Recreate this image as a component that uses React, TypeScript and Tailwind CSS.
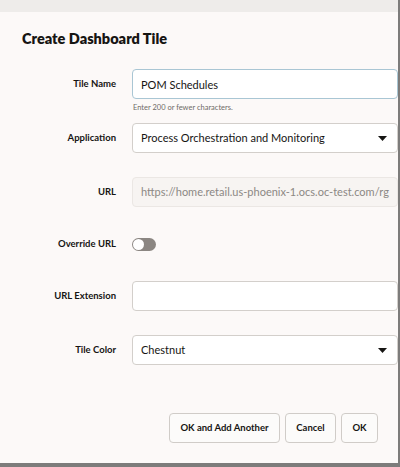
import { useState } from 'react';

const Caret = () => (
  <svg width="9" height="5" viewBox="0 0 9 5" className="shrink-0">
    <path d="M0 0h9L4.5 5z" fill="#161513" />
  </svg>
);

const Label = ({ children }: { children: React.ReactNode }) => (
  <div className="w-[116px] shrink-0 text-right text-[9.5px] font-bold text-[#161513] leading-none">{children}</div>
);

const App = () => {
  const [name, setName] = useState('POM Schedules');
  const [override, setOverride] = useState(false);

  return (
    <div
      className="w-[400px] h-[467px] overflow-hidden bg-[#7d7c7b] text-[#161513]"
      style={{ fontFamily: 'Lato, "Open Sans", sans-serif' }}
    >
      <div className="h-[463px] mr-[2px] flex flex-col bg-[#fcf9f8]">
        <div className="h-3 bg-[#eeecea]" />

        <h1 className="mt-[17px] ml-[22px] text-[14.5px] leading-5 font-extrabold">Create Dashboard Tile</h1>

        {/* Tile Name */}
        <div className="mt-5 flex items-center gap-4">
          <Label>Tile Name</Label>
          <input
            value={name}
            onChange={(e) => setName(e.target.value)}
            className="flex-1 h-[30px] px-2 rounded-[4px] border border-[#a9c6d4] bg-white text-[11px] outline-none"
          />
        </div>
        <div className="mt-[3px] ml-[133px] text-[7.5px] leading-3 text-[#6f6b67]">Enter 200 or fewer characters.</div>

        {/* Application */}
        <div className="mt-[9px] flex items-center gap-4">
          <Label>Application</Label>
          <div className="flex-1 h-[30px] px-2 pr-[10px] rounded-[4px] border border-[#d3cfcb] bg-white flex items-center justify-between text-[11px]">
            <span>Process Orchestration and Monitoring</span>
            <Caret />
          </div>
        </div>

        {/* URL */}
        <div className="mt-6 flex items-center gap-4">
          <Label>URL</Label>
          <div className="flex-1 min-w-0 h-[30px] px-2 rounded-[4px] border border-[#ebe7e4] bg-[#f7f4f2] flex items-center text-[11px] text-[#8c8884] whitespace-nowrap overflow-hidden">
            https://home.retail.us-phoenix-1.ocs.oc-test.com/rg
          </div>
        </div>

        {/* Override URL */}
        <div className="mt-[22px] h-[30px] flex items-center gap-4">
          <Label>Override URL</Label>
          <button
            onClick={() => setOverride(!override)}
            className={`w-6 h-[13px] rounded-full p-[1px] flex items-center ${override ? 'bg-[#227e9e] justify-end' : 'bg-[#8b8682] justify-start'}`}
          >
            <span className="w-[11px] h-[11px] rounded-full bg-white" />
          </button>
        </div>

        {/* URL Extension */}
        <div className="mt-[22px] flex items-center gap-4">
          <Label>URL Extension</Label>
          <input className="flex-1 h-[30px] px-2 rounded-[4px] border border-[#d3cfcb] bg-white text-[11px] outline-none" />
        </div>

        {/* Tile Color */}
        <div className="mt-6 flex items-center gap-4">
          <Label>Tile Color</Label>
          <div className="flex-1 h-[30px] px-2 pr-[10px] rounded-[4px] border border-[#d3cfcb] bg-white flex items-center justify-between text-[11px]">
            <span>Chestnut</span>
            <Caret />
          </div>
        </div>

        {/* Buttons */}
        <div className="mt-12 mr-5 flex justify-end gap-[5px]">
          <button className="w-[111px] h-[30px] rounded-[4px] border border-[#d0ccc8] bg-[#fcfbfa] text-[9.5px] font-bold">OK and Add Another</button>
          <button className="w-[51px] h-[30px] rounded-[4px] border border-[#d0ccc8] bg-[#fcfbfa] text-[9.5px] font-bold">Cancel</button>
          <button className="w-[37px] h-[30px] rounded-[4px] border border-[#d0ccc8] bg-[#fcfbfa] text-[9.5px] font-bold">OK</button>
        </div>
      </div>
    </div>
  );
};

export default App;
